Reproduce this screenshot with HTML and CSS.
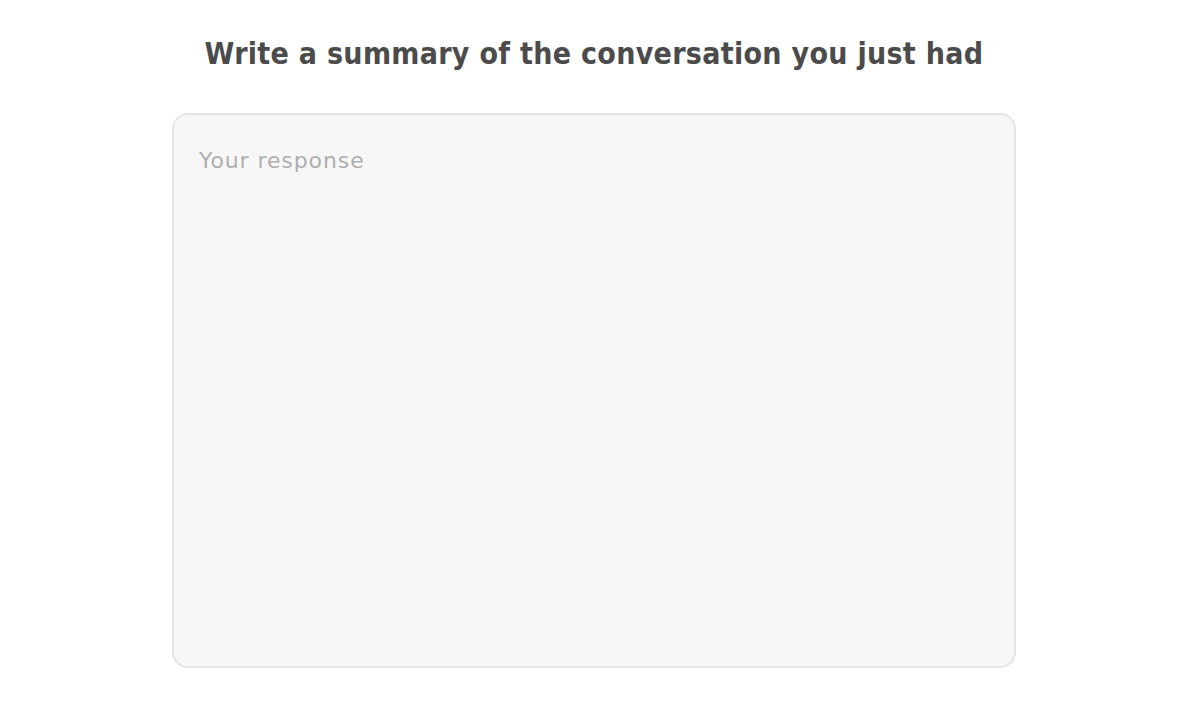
FILE: index.html
```html
<!DOCTYPE html>
<html lang="en">
<head>
    <meta charset="UTF-8">
    <title>Summary</title>
    <link rel="stylesheet" href="styles.css">
</head>
<body>
    <main class="page">
        <h1 class="prompt">Write a summary of the conversation you just had</h1>
        <textarea class="answer" placeholder="Your response"></textarea>
    </main>
</body>
</html>
```
FILE: styles.css
```css
body {
    margin: 0;
    background-color: white;
    font-family: 'DejaVu Sans', sans-serif;
}

.page {
    display: flex;
    flex-direction: column;
    align-items: center;
    padding: 34px 12px 0px 0px;
}

.prompt {
    margin: 0px;
    font-family: 'DejaVu Sans Condensed', 'DejaVu Sans', sans-serif;
    font-size: 30px;
    font-weight: bold;
    letter-spacing: 0.3px;
    color: #4b4b4b;
    line-height: 40px;
}

.answer {
    margin-top: 39px;
    width: 844px;
    height: 555px;
    box-sizing: border-box;
    border: 2px solid #e5e5e5;
    border-radius: 16px;
    background-color: #f7f7f7;
    padding: 33px 24px 32px 25px;
    font-family: 'DejaVu Sans', sans-serif;
    font-size: 22px;
    letter-spacing: 0.9px;
    color: #4b4b4b;
    resize: none;
    outline: none;
}

.answer::placeholder {
    color: #afafaf;
}
```
